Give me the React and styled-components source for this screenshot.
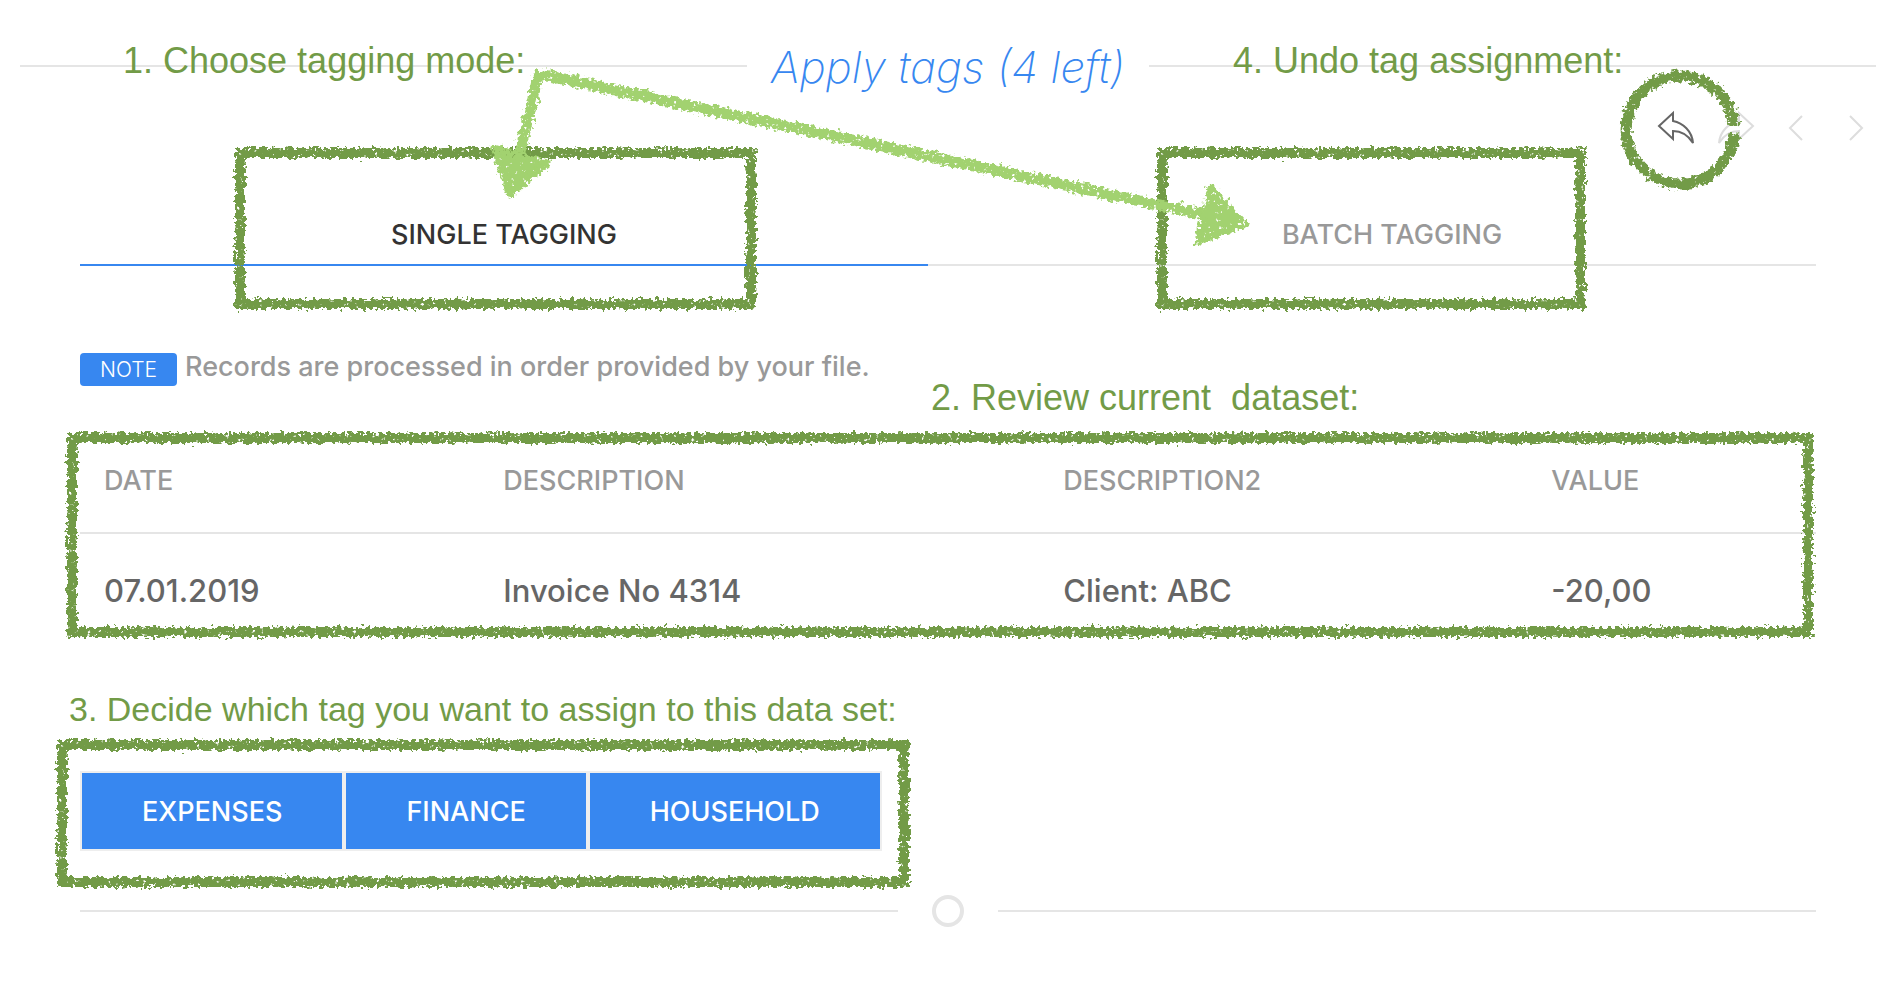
import React from "react";
import styled, { createGlobalStyle } from "styled-components";

const BLUE = "#3787f0";
const LINE = "#e5e5e5";
const MUTED = "#999";
const GREEN = "#729b47";
const LIGHT_GREEN = "#a2d26f";

const GlobalStyle = createGlobalStyle`
  *, *::before, *::after { box-sizing: border-box; }
  body {
    margin: 0;
    background: #fff;
    color: #666;
    font-family: Inter, "Liberation Sans", sans-serif;
    font-size: 27px;
    font-weight: 500;
    line-height: 42px;
  }
`;

const Page = styled.div`
  padding: 36px 26px 56px 20px;
`;

const Header = styled.header`
  position: relative;
  display: flex;
  align-items: center;
`;

const Rule = styled.span`
  flex: 1;
  height: 2px;
  background: ${LINE};
`;

const Title = styled.h1`
  margin: 0;
  padding-top: 2px;
  width: 402px;
  text-align: center;
  white-space: nowrap;
  color: ${BLUE};
  font-size: 44px;
  line-height: 58px;
  font-weight: 200;
  font-style: italic;
`;

const Toolbar = styled.nav`
  display: flex;
  justify-content: flex-end;
  gap: 20px;
  margin-top: 12px;
`;

const IconButton = styled.button`
  position: relative;
  width: 40px;
  height: 40px;
  padding: 0;
  border: 0;
  background: none;
  color: ${(p) => (p.disabled ? "#ddd" : "#666")};

  & > svg {
    display: block;
    fill: none;
    stroke: currentColor;
    stroke-width: 2;
  }
`;

const Main = styled.main`
  padding: 0 60px;
`;

const Tabs = styled.div`
  position: relative;
  display: grid;
  grid-template-columns: 1fr 1fr;
  gap: 40px;
  margin-top: 54px;
  background: linear-gradient(${LINE}, ${LINE}) bottom / 100% 2px no-repeat;
`;

const Tab = styled.button`
  position: relative;
  padding: 12px 20px 8px;
  border: 0;
  border-bottom: 2px solid ${(p) => (p.$active ? BLUE : LINE)};
  background: none;
  color: ${(p) => (p.$active ? "#333" : MUTED)};
  font: inherit;
  text-transform: uppercase;
`;

const NoteRow = styled.div`
  position: relative;
  display: flex;
  align-items: center;
  gap: 8px;
  margin-top: 80px;
  color: ${MUTED};
`;

const Badge = styled.span`
  padding: 0 20px;
  margin-top: 4px;
  border-radius: 4px;
  background: ${BLUE};
  color: #fff;
  font-size: 21px;
  line-height: 33px;
  font-weight: 300;
`;

const Dataset = styled.section`
  position: relative;
  margin-top: 38px;
`;

const Table = styled.table`
  width: 100%;
  table-layout: fixed;
  border-collapse: collapse;
  text-align: left;
`;

const Col = styled.col`
  width: ${(p) => p.$share}%;
`;

const HeadCell = styled.th`
  padding: 34px 24px 30px;
  color: ${MUTED};
  font-weight: inherit;
  text-transform: uppercase;
`;

const Cell = styled.td`
  padding: 33px 24px 31px;
  border-top: 2px solid ${LINE};
  font-size: 31px;
  line-height: 48px;
`;

const TagSection = styled.section`
  position: relative;
  display: flex;
  margin-top: 125px;
`;

const TagButton = styled.button`
  padding: 1px 60px 0;
  border: 2px solid #eee;
  background: ${BLUE};
  color: #fff;
  font: inherit;
  line-height: 75px;
  text-transform: uppercase;
`;

const Divider = styled.div`
  display: flex;
  align-items: center;
  gap: 34px;
  margin-top: 44px;
`;

const Ring = styled.span`
  width: 32px;
  height: 32px;
  border: 4px solid ${LINE};
  border-radius: 50%;
`;

const Hint = styled.p`
  position: absolute;
  z-index: 2;
  top: ${(p) => p.$top}px;
  left: ${(p) => p.$left};
  margin: 0;
  color: ${GREEN};
  font-family: "Liberation Sans", Arial, sans-serif;
  font-size: ${(p) => (p.$compact ? 34 : 36)}px;
  font-weight: 400;
  line-height: 40px;
  white-space: pre;
  pointer-events: none;
`;

const Overlay = styled.span`
  position: absolute;
  z-index: 1;
  inset: ${(p) => p.$inset};
  pointer-events: none;

  & > svg {
    display: block;
    width: 100%;
    height: 100%;
    overflow: visible;
    fill: none;
  }
`;

const ArrowLayer = styled(Overlay)`
  z-index: 3;
`;

const Defs = styled.svg`
  position: absolute;
  width: 0;
  height: 0;
`;

function CrayonFilters() {
  return (
    <Defs aria-hidden="true">
      <defs>
        <filter id="crayon" x="-10%" y="-15%" width="120%" height="130%">
          <feTurbulence type="fractalNoise" baseFrequency="0.26" numOctaves="2" seed="4" result="noise" />
          <feDisplacementMap in="SourceGraphic" in2="noise" scale="10" xChannelSelector="R" yChannelSelector="G" result="rough" />
          <feColorMatrix in="noise" type="matrix" values="0 0 0 0 0  0 0 0 0 0  0 0 0 0 0  0 0 -9 0 7.1" result="grain" />
          <feComposite in="rough" in2="grain" operator="in" />
        </filter>
      </defs>
    </Defs>
  );
}

function CrayonFrame({ inset }) {
  return (
    <Overlay $inset={inset} aria-hidden="true">
      <svg>
        <rect width="100%" height="100%" stroke={GREEN} strokeWidth="10" filter="url(#crayon)" />
      </svg>
    </Overlay>
  );
}

function CrayonCircle() {
  return (
    <Overlay $inset="-50px -39px -55px -31px" aria-hidden="true">
      <svg viewBox="0 0 110 110">
        <path
          d="M109 51 A54 54 0 1 0 109 58"
          stroke={GREEN}
          strokeWidth="11"
          filter="url(#crayon)"
        />
      </svg>
    </Overlay>
  );
}

function CrayonArrows() {
  return (
    <ArrowLayer $inset="-202px 0 0 -80px" aria-hidden="true">
      <svg>
        <g filter="url(#crayon)" stroke={LIGHT_GREEN} fill={LIGHT_GREEN} strokeLinejoin="round">
          <path d="M520 152 L538 77 L544 75 L1202 214" fill="none" strokeWidth="11" />
          <path d="M494 148 L547 163 L510 194 Z" strokeWidth="7" />
          <path d="M1211 188 L1244 224 L1198 242 Z" strokeWidth="7" />
        </g>
      </svg>
    </ArrowLayer>
  );
}

const REPLY = "M3 18 L17 5 V13 C27 15 36 23 37 35 C32 27 26 23 17 23 V31 Z";
const FORWARD = "M37 18 L23 5 V13 C13 15 4 23 3 35 C8 27 14 23 23 23 V31 Z";

function Icon({ d }) {
  return (
    <svg width="40" height="40" viewBox="0 0 40 40" aria-hidden="true">
      <path d={d} />
    </svg>
  );
}

const COLUMNS = [
  { name: "Date", share: 23, value: "07.01.2019" },
  { name: "Description", share: 32.26, value: "Invoice No 4314" },
  { name: "Description2", share: 28.11, value: "Client: ABC" },
  { name: "Value", share: 16.63, value: "-20,00" },
];

const TAGS = ["Expenses", "Finance", "Household"];

export default function App() {
  return (
    <>
      <GlobalStyle />
      <CrayonFilters />
      <Page>
        <Header>
          <Rule />
          <Title>Apply tags (4 left)</Title>
          <Rule />
          <Hint $top={5} $left="103px">1. Choose tagging mode:</Hint>
          <Hint $top={5} $left="calc(50% + 285px)">4. Undo tag assignment:</Hint>
        </Header>
        <Toolbar aria-label="History">
          <IconButton type="button" aria-label="Undo">
            <Icon d={REPLY} />
            <CrayonCircle />
          </IconButton>
          <IconButton type="button" aria-label="Redo" disabled>
            <Icon d={FORWARD} />
          </IconButton>
          <IconButton type="button" aria-label="Previous" disabled>
            <Icon d="M26 32 L14 20 L26 8" />
          </IconButton>
          <IconButton type="button" aria-label="Next" disabled>
            <Icon d="M14 32 L26 20 L14 8" />
          </IconButton>
        </Toolbar>
        <Main>
          <Tabs role="tablist">
            <Tab type="button" role="tab" aria-selected="true" $active>
              Single tagging
              <CrayonFrame inset="-49px 177px -40px 160px" />
            </Tab>
            <Tab type="button" role="tab" aria-selected="false">
              Batch tagging
              <CrayonFrame inset="-49px 236px -40px 194px" />
            </Tab>
            <CrayonArrows />
          </Tabs>
          <NoteRow>
            <Badge>NOTE</Badge>
            <span>Records are processed in order provided by your file.</span>
            <Hint $top={32} $left="calc(50% - 17px)">{"2. Review current  dataset:"}</Hint>
          </NoteRow>
          <Dataset>
            <Table>
              <colgroup>
                {COLUMNS.map((c) => (
                  <Col key={c.name} $share={c.share} />
                ))}
              </colgroup>
              <thead>
                <tr>
                  {COLUMNS.map((c) => (
                    <HeadCell key={c.name} scope="col">{c.name}</HeadCell>
                  ))}
                </tr>
              </thead>
              <tbody>
                <tr>
                  {COLUMNS.map((c) => (
                    <Cell key={c.name}>{c.value}</Cell>
                  ))}
                </tr>
              </tbody>
            </Table>
            <CrayonFrame inset="12px 8px 14px -8px" />
          </Dataset>
          <TagSection>
            {TAGS.map((tag) => (
              <TagButton key={tag} type="button">{tag}</TagButton>
            ))}
            <Hint $compact $top={-82} $left="-11px">3. Decide which tag you want to assign to this data set:</Hint>
            <CrayonFrame inset="-26px 912px -31px -18px" />
          </TagSection>
          <Divider>
            <Rule />
            <Ring />
            <Rule />
          </Divider>
        </Main>
      </Page>
    </>
  );
}
